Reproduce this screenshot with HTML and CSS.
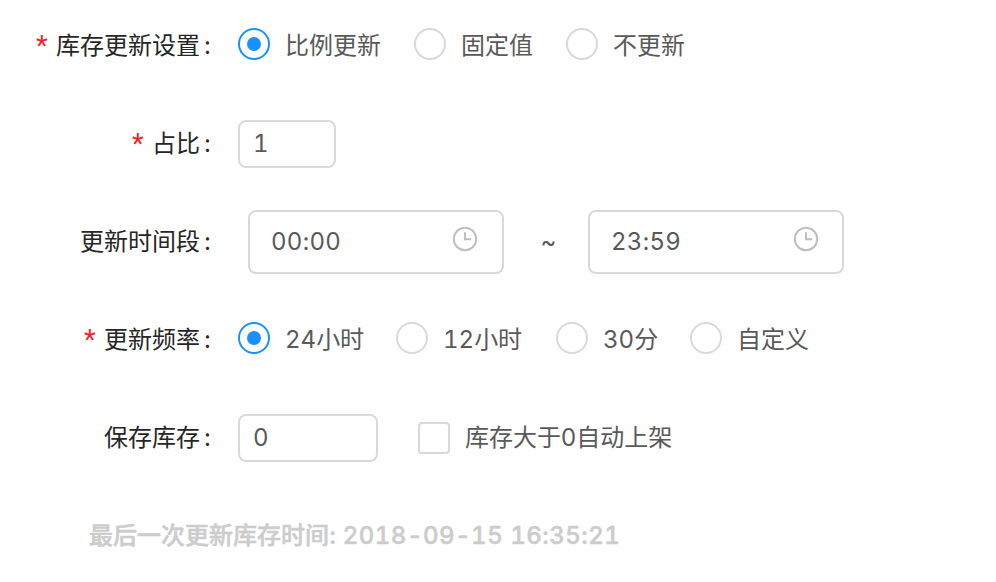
FILE: index.html
```html
<!DOCTYPE html>
<html lang="zh-CN">
<head>
<meta charset="utf-8">
<title>库存更新设置</title>
<link rel="stylesheet" href="styles.css">
</head>
<body>
<form class="form">
  <div class="row">
    <div class="label"><span class="star">*</span>库存更新设置<span class="colon">:</span></div>
    <div class="radios">
      <label class="option"><span class="radio checked"></span><span class="text">比例更新</span></label>
      <label class="option"><span class="radio"></span><span class="text">固定值</span></label>
      <label class="option"><span class="radio"></span><span class="text">不更新</span></label>
    </div>
  </div>
  <div class="row">
    <div class="label"><span class="star">*</span>占比<span class="colon">:</span></div>
    <div class="input ratio">1</div>
  </div>
  <div class="row">
    <div class="label">更新时间段<span class="colon">:</span></div>
    <div class="range">
      <div class="input time"><span>00:00</span>
        <svg class="clock" viewBox="0 0 26 26"><circle cx="13" cy="13" r="11.2"/><path d="M13 6.2v7h6.2"/></svg>
      </div>
      <span class="tilde">~</span>
      <div class="input time end"><span>23:59</span>
        <svg class="clock" viewBox="0 0 26 26"><circle cx="13" cy="13" r="11.2"/><path d="M13 6.2v7h6.2"/></svg>
      </div>
    </div>
  </div>
  <div class="row">
    <div class="label"><span class="star">*</span>更新频率<span class="colon">:</span></div>
    <div class="radios frequency">
      <label class="option wide"><span class="radio checked"></span><span class="text">24小时</span></label>
      <label class="option wide"><span class="radio"></span><span class="text">12小时</span></label>
      <label class="option half"><span class="radio"></span><span class="text">30分</span></label>
      <label class="option"><span class="radio"></span><span class="text">自定义</span></label>
    </div>
  </div>
  <div class="row">
    <div class="label">保存库存<span class="colon">:</span></div>
    <div class="input stock">0</div>
    <label class="check"><span class="checkbox"></span><span class="text">库存大于0自动上架</span></label>
  </div>
  <p class="updated">最后一次更新库存时间: <span class="stamp">2018-09-15 16:35:21</span></p>
</form>
</body>
</html>
```
FILE: styles.css
```css
* { box-sizing: border-box; }
body {
  margin: 0;
  background: #fff;
  color: #595959;
  font: 24px/36px Inter, "Noto Sans CJK SC", sans-serif;
}
.form { padding-top: 14px; }
.row {
  display: flex;
  align-items: center;
  height: 64px;
  margin-bottom: 34px;
}
.label {
  display: flex;
  justify-content: flex-end;
  width: 238px;
  color: #262626;
  white-space: nowrap;
}
.star {
  width: 12px;
  margin-right: 8px;
  color: #f5222d;
  font-family: Roboto, sans-serif;
  font-size: 27px;
}
.colon { width: 38px; padding-left: 4px; }
.radios { display: flex; }
.option { display: flex; align-items: center; height: 36px; margin-right: 33px; white-space: nowrap; }
.frequency { font-variant-numeric: tabular-nums; }
.frequency .option { margin-right: 0; }
.frequency .wide { width: 158px; }
.frequency .wide + .wide { width: 160px; }
.frequency .half { width: 134px; }
.radio {
  display: flex;
  align-items: center;
  justify-content: center;
  width: 32px;
  height: 32px;
  margin: -4px 15px 0 0;
  border: 2px solid #d9d9d9;
  border-radius: 50%;
}
.checked { border-color: #1890ff; }
.checked::after {
  content: "";
  width: 14px;
  height: 14px;
  border-radius: 50%;
  background: #1890ff;
}
.input {
  display: flex;
  align-items: center;
  height: 48px;
  border: 2px solid #d9d9d9;
  border-radius: 8px;
  font-variant-numeric: tabular-nums;
}
.ratio { width: 98px; padding-left: 13px; }
.stock { width: 140px; padding-left: 13px; }
.range { display: flex; align-items: center; margin-left: 10px; }
.time {
  justify-content: space-between;
  width: 256px;
  height: 64px;
  padding: 0 24px 0 21px;
  letter-spacing: 0.3px;
}
.end { padding-right: 23px; }
.clock {
  width: 26px;
  height: 26px;
  margin-top: -7px;
  fill: none;
  stroke: #bfbfbf;
  stroke-width: 2;
}
.tilde { width: 84px; padding-left: 5px; text-align: center; }
.check { display: flex; align-items: center; margin-left: 40px; }
.checkbox {
  width: 32px;
  height: 32px;
  margin-right: 15px;
  border: 2px solid #d9d9d9;
  border-radius: 4px;
}
.updated {
  margin: 48px 0 0 89px;
  color: #ccc;
  font-weight: 500;
  white-space: nowrap;
  -webkit-text-stroke: 0.5px #ccc;
}
.stamp { font-variant-numeric: tabular-nums; letter-spacing: 0.5px; }
```
